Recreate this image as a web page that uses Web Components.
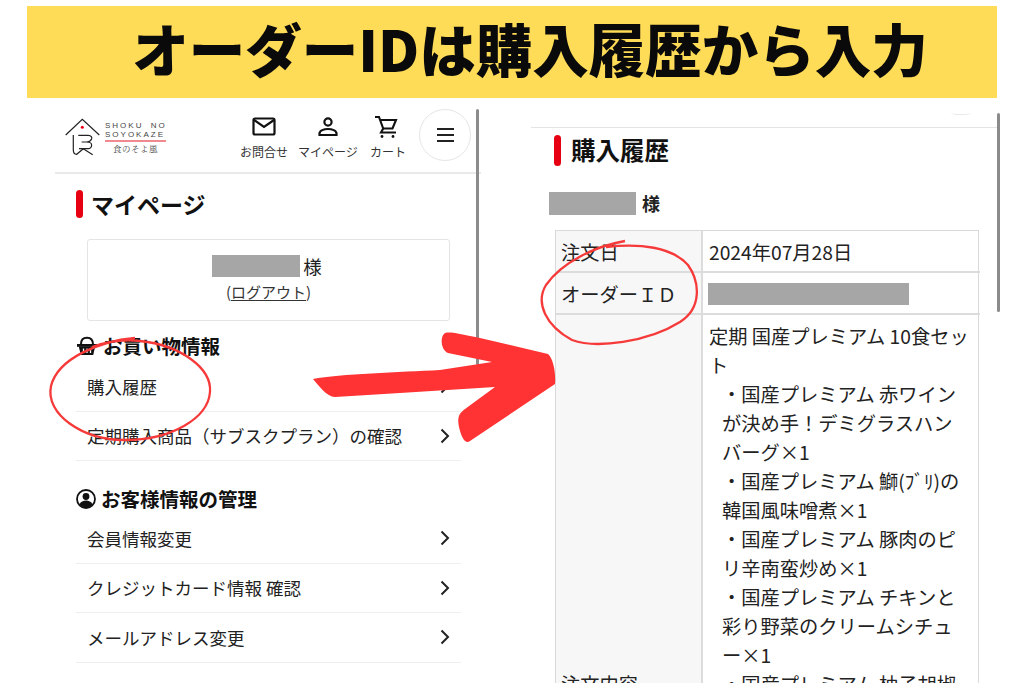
<!DOCTYPE html>
<html lang="ja"><head><meta charset="utf-8"><title>オーダーID</title>
<style>
html,body{margin:0;background:#fff}
body{font-family:"Noto Sans CJK JP","Noto Sans",sans-serif;color:#222}
</style></head><body>
<guide-page>
  <guide-banner slot="banner">オーダーIDは購入履歴から入力</guide-banner>
  <mypage-panel slot="left"></mypage-panel>
  <history-panel slot="right"></history-panel>
  <guide-marks slot="marks"></guide-marks>
</guide-page>
<script>
function def(name,html,init){customElements.define(name,class extends HTMLElement{
  constructor(){super();this.attachShadow({mode:'open'}).innerHTML=html;}
  connectedCallback(){if(init)init(this);}
});}
const FF='"Noto Sans CJK JP","Noto Sans",sans-serif';

def('guide-page',`<style>
:host{display:block;position:relative;width:1024px;height:683px;overflow:hidden}
.top{padding:6px 27px 12px}
.row{display:flex;padding-left:55px}
</style><div class="top"><slot name="banner"></slot></div>
<div class="row"><slot name="left"></slot><slot name="right"></slot></div>
<slot name="marks"></slot>`);

def('guide-banner',`<style>
:host{display:flex;height:92px;background:#ffdc58;align-items:center;justify-content:center;box-sizing:border-box;
font:900 56.500px/1 ${FF};color:#0a0a0a;white-space:nowrap}
span{display:block;margin:-10px 0 0 50px;transform:translateX(-7px)}
</style><span><slot></slot></span>`);

def('page-title',`<style>
:host{display:flex;align-items:center;gap:8px;font:700 var(--ts,23px)/1 ${FF};color:#111}
i{display:block;width:7px;height:var(--bh,28px);background:#e60012;border-radius:4px}
</style><i></i><slot></slot>`);

def('redact-bar',`<style>:host{display:inline-block;background:#a6a6a6;width:var(--w,88px);height:var(--h,22px)}</style>`);

def('menu-row',`<style>
:host{display:flex;align-items:center;justify-content:space-between;height:49.5px;box-sizing:border-box;
padding:0 11px 0 11px;border-bottom:1px solid #eeeeee;font:400 17.500px/1 ${FF};color:#222;white-space:nowrap}
svg{width:10px;height:16px;flex:none}
</style><slot></slot><svg viewBox="0 0 10 16"><path d="M1.500 1.500 8 8l-6.500 6.500" fill="none" stroke="#222" stroke-width="2"/></svg>`);

def('menu-section',`<style>
:host{display:block;width:385px}
h3{display:flex;align-items:center;gap:5px;margin:0;height:var(--hh,33px);font:700 19.500px/1 ${FF};color:#111}
::slotted(svg){flex:none}
</style><h3><slot name="icon"></slot><slot name="title"></slot></h3><slot></slot>`);

def('nav-tool',`<style>
:host{display:flex;flex-direction:column;align-items:center;width:var(--tw,60px);font:400 12px/1 ${FF};color:#333;white-space:nowrap}
.i{height:30px;display:flex;align-items:center;justify-content:center}
b{font-weight:400;margin:4px 0 0 var(--lx,0)}
</style><div class="i"><slot name="icon"></slot></div><b><slot></slot></b>`);

def('soyokaze-logo',`<style>
:host{display:flex;align-items:center;width:105px;height:46px;gap:4px}
.t{display:flex;flex-direction:column;align-items:stretch;width:61px;font:400 8px/9px "Liberation Sans",sans-serif;color:#444;letter-spacing:2px;white-space:pre}
.w{word-spacing:3px}
.r{height:2px;background:#f08a90;margin:1px 0 1px}
.k{font:400 8.500px/11px "Noto Serif CJK JP","Noto Sans CJK JP",serif;letter-spacing:.5px;text-align:center;color:#444}
</style><svg width="36" height="38" viewBox="0 0 36 38" fill="none" stroke="#222" stroke-width="1.200">
<path d="M.7 17 17.300 1.300 34.300 17"/><circle cx="17.300" cy="9.300" r="1.500" fill="#e60012" stroke="none"/>
<path d="M8.300 17v15c0 3 1.500 4.300 3.400 4.300l6.600-5.600 9.400 6"/><path d="M13.300 17.300h10c3 .2 4 2.300 3.300 3.700-.9 2-3 3-5 3h-5M21.600 24c3 0 5 1 5 3 .2 2.200-1.500 3.700-3.300 3.700h-9.300"/></svg>
<div class="t"><span class="w">SHOKU NO</span><span>SOYOKAZE</span><div class="r"></div><span class="k">食のそよ風</span></div>`);

def('mypage-panel',`<style>
:host{display:block;position:relative;width:425px;height:573px;flex:none;box-sizing:border-box}
header{display:flex;align-items:center;height:64px;box-sizing:border-box;border-bottom:2px solid #e9e9e9;padding:0 0 0 10px;width:426px}
soyokaze-logo{margin-top:-8px}
.tools{display:flex;margin:-13px 0 0 64px}
.burger{width:52px;height:52px;box-sizing:border-box;border:1px solid #e6e6e6;border-radius:50%;display:flex;flex-direction:column;justify-content:center;align-items:center;gap:4px;margin:-12px 0 0 9px}
.burger i{display:block;width:17px;height:2px;background:#222}
.sb{position:absolute;left:421px;top:-1px;width:3px;height:256px;background:#8b8b8b;border-radius:2px}
main{padding:16px 0 0 21px}
.box{margin:21px 0 0 11px;width:363px;height:82px;box-sizing:border-box;border:1px solid #e4e4e4;border-radius:3px;display:flex;flex-direction:column;align-items:center;padding-top:15px}
.n{display:flex;align-items:center;gap:3px;font:400 18.500px/22px ${FF};color:#222;margin-left:-3px}
.lo{font:400 15px/20px ${FF};margin-top:5px;color:#333}
.lo u{text-underline-offset:2px}
.s1{margin-top:8px}.s2{margin-top:22px;--hh:31px}
</style>
<header><soyokaze-logo></soyokaze-logo>
<div class="tools">
<nav-tool style="--tw:60px"><svg slot="icon" width="24" height="20" viewBox="0 0 24 20" fill="none" stroke="#111" stroke-width="2.200"><rect x="1.500" y="1.500" width="21" height="16" rx="1.500"/><path d="m2 3 10 7 10-7"/></svg>お問合せ</nav-tool>
<nav-tool style="--tw:68px"><svg slot="icon" width="20" height="20" viewBox="0 0 20 20" fill="none" stroke="#111" stroke-width="2.200"><circle cx="10" cy="5" r="3.600"/><path d="M1.500 18v-1.500c0-3 4.500-4.500 8.500-4.500s8.500 1.500 8.500 4.500V18z"/></svg>マイページ</nav-tool>
<nav-tool style="--tw:48px;--lx:4px"><svg slot="icon" width="24" height="24" viewBox="0 0 24 24" fill="none" stroke="#111" stroke-width="2.100"><path d="M1 2h4l4.200 11.500h9.300L22 5H7"/><path d="M9.200 13.500 7 17.500h15"/><circle cx="8" cy="21.500" r="1.400" fill="#111" stroke="none"/><circle cx="19" cy="21.500" r="1.400" fill="#111" stroke="none"/></svg>カート</nav-tool>
</div>
<div class="burger"><i></i><i></i><i></i></div></header>
<div class="sb"></div>
<main>
<page-title>マイページ</page-title>
<div class="box"><div class="n"><redact-bar></redact-bar>様</div><div class="lo">(<u>ログアウト</u>)</div></div>
<menu-section class="s1"><svg slot="icon" width="22" height="20" viewBox="0 0 22 20" fill="none"><path d="M5 8.500C5 3.500 7 1.800 11 1.800s6 1.700 6 6.700" stroke="#111" stroke-width="2"/><path d="M1 8h20v2.800H1z" fill="#111"/><path d="M2.800 10.500 4.800 19h12.400l2-8.500z" fill="#111"/><path d="M7.500 12.500v4.500M11 12.500v4.500M14.500 12.500v4.500" stroke="#fff" stroke-width="1.300"/></svg><span slot="title">お買い物情報</span>
<menu-row>購入履歴</menu-row><menu-row>定期購入商品（サブスクプラン）の確認</menu-row></menu-section>
<menu-section class="s2"><svg slot="icon" width="20" height="20" viewBox="0 0 20 20"><circle cx="10" cy="10" r="9" fill="#fff" stroke="#111" stroke-width="1.800"/><circle cx="10" cy="7.500" r="3.400" fill="#111"/><path d="M3.500 15.500c1-3 4-4 6.500-4s5.500 1 6.500 4C15 17.500 12.500 18.500 10 18.500s-5-1-6.500-3z" fill="#111"/></svg><span slot="title">お客様情報の管理</span>
<menu-row>会員情報変更</menu-row><menu-row>クレジットカード情報 確認</menu-row><menu-row>メールアドレス変更</menu-row></menu-section>
</main>`);

def('history-panel',`<style>
:host{display:block;position:relative;width:469px;height:573px;flex:none;margin-left:51px;overflow:hidden}
.hd{height:17px;border-bottom:1px solid #e4e4e4;width:469px;position:relative}
.hd i{position:absolute;left:420px;top:1px;width:20px;height:3px;border-bottom:1px solid #e8e8e8;border-radius:0 0 50% 50%}
.sb{position:absolute;left:466px;top:3px;width:3px;height:199px;background:#8b8b8b;border-radius:2px}
.m{padding:7px 0 0 23px}
page-title{--ts:24.500px;--bh:31px;gap:10px}
.n{display:flex;align-items:center;gap:5px;margin:26px 0 0 -5px;font:700 18px/23px ${FF};color:#222;--h:23px;--w:87px}
.n redact-bar{margin-right:1px}
.t{display:grid;grid-template-columns:147px 277px;margin:15px 0 0 1px;border:solid #d9d9d9;border-width:1px 1px 0 1px;width:424px;box-sizing:border-box;font:400 19.250px/29px ${FF};color:#222}
.c{border-bottom:2px solid #dcdcdc;padding:7px 7px 3px;box-sizing:border-box;min-height:42px}
.l{background:#f7f7f7;border-right:2px solid #dcdcdc;padding-left:5px}
.v{padding-left:6px;white-space:nowrap}
.it{padding-left:13px;display:block}
.lb{padding-top:355px}
</style>
<div class="hd"><i></i></div><div class="sb"></div>
<div class="m"><page-title>購入履歴</page-title>
<div class="n"><redact-bar></redact-bar>様</div>
<div class="t">
<div class="c l">注文日</div><div class="c v">2024年07月28日</div>
<div class="c l">オーダーＩＤ</div><div class="c v"><redact-bar style="--w:201px;margin:3px 0 0 -1px;display:block"></redact-bar></div>
<div class="c l lb">注文内容</div><div class="c v">定期 国産プレミアム 10食セッ<br>ト
<span class="it">・国産プレミアム 赤ワイン<br>が決め手！デミグラスハン<br>バーグ×1</span>
<span class="it">・国産プレミアム 鰤(ﾌﾞﾘ)の<br>韓国風味噌煮×1</span>
<span class="it">・国産プレミアム 豚肉のピ<br>リ辛南蛮炒め×1</span>
<span class="it">・国産プレミアム チキンと<br>彩り野菜のクリームシチュ<br>ー×1</span>
<span class="it">・国産プレミアム 柚子胡椒</span></div>
</div></div>`);

def('guide-marks',`<style>
:host{position:absolute;left:0;top:0;width:1024px;height:683px;display:block;pointer-events:none}
svg{display:block}
</style><svg width="1024" height="683" viewBox="0 0 1024 683" fill="none">
<path d="M313 379C340 374 400 372 440 370L492 362 448 353C441 350 440 338 444 334 447 331 455 333 480 338L548 354C553 358 556 372 555 384L470 441C466 444 462 440 459 427 457 418 459 413 465 409L495 387 400 393 335 397C327 397 318 385 313 379Z" fill="#ff3333"/>
<path d="M135 338C100 341 58 358 51 386 45 414 82 440 125 440 172 440 208 418 210 392 212 368 180 345 140 341 120 339 105 342 92 347" stroke="#f63a3a" stroke-width="2.300"/>
<path d="M625 241C596 246 562 262 546 285 535 303 546 326 572 340 596 349 648 342 680 322 702 308 700 282 688 265 672 247 640 243 606 247" stroke="#f63a3a" stroke-width="2.300"/>
</svg>`);
</script>
</body></html>
